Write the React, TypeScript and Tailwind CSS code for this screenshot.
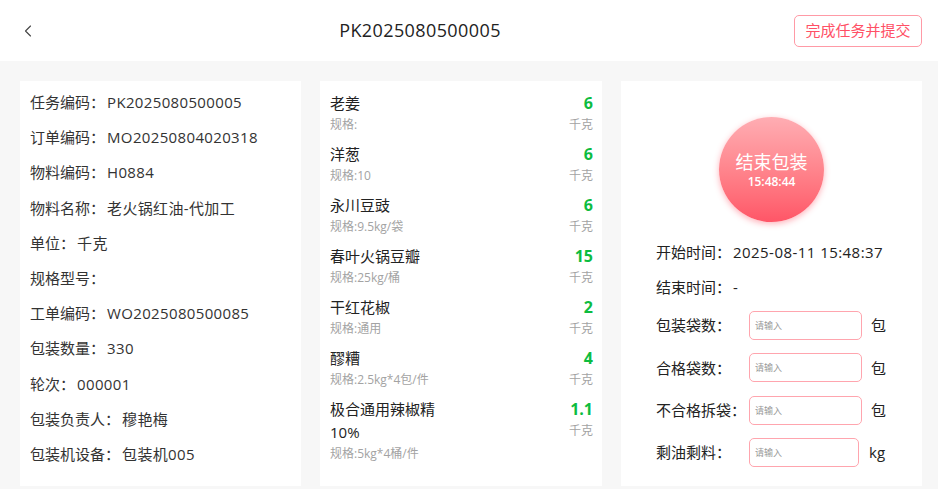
import React from "react"
import { ChevronLeft } from "lucide-react"

type Material = { name: string; spec: string; qty: string }

const fields = [
  ["任务编码", "PK2025080500005"],
  ["订单编码", "MO20250804020318"],
  ["物料编码", "H0884"],
  ["物料名称", "老火锅红油-代加工"],
  ["单位", "千克"],
  ["规格型号", ""],
  ["工单编码", "WO2025080500085"],
  ["包装数量", "330"],
  ["轮次", "000001"],
  ["包装负责人", "穆艳梅"],
  ["包装机设备", "包装机005"],
]

const materials: Material[] = [
  { name: "老姜", spec: "规格:", qty: "6" },
  { name: "洋葱", spec: "规格:10", qty: "6" },
  { name: "永川豆豉", spec: "规格:9.5kg/袋", qty: "6" },
  { name: "春叶火锅豆瓣", spec: "规格:25kg/桶", qty: "15" },
  { name: "干红花椒", spec: "规格:通用", qty: "2" },
  { name: "醪糟", spec: "规格:2.5kg*4包/件", qty: "4" },
  { name: "极合通用辣椒精10%", spec: "规格:5kg*4桶/件", qty: "1.1" },
]

const inputs = [
  { label: "包装袋数：", unit: "包" },
  { label: "合格袋数：", unit: "包" },
  { label: "不合格拆袋：", unit: "包" },
  { label: "剩油剩料：", unit: "kg" },
]

export default function App() {
  return (
    <div className="h-[489px] w-[938px] overflow-hidden bg-[#f7f7f7] font-['Open_Sans','Noto_Sans_CJK_SC',sans-serif] text-[15px] text-[#333]">
      <header className="flex h-[61px] items-center justify-between bg-white pl-[18px] pr-[16px]">
        <ChevronLeft className="h-[20px] w-[20px] text-[#444]" strokeWidth={1.3} />
        <div className="ml-[8px] text-[18px] tracking-[0.4px] text-[#222]">PK2025080500005</div>
        <button className="h-[32px] w-[128px] rounded-[5px] border border-[#ff9aa6] text-[15px] text-[#ff5065]">
          完成任务并提交
        </button>
      </header>

      <main className="flex gap-[19px] pl-[20px] pt-[20px]">
        <section className="flex h-[405px] w-[281px] flex-col gap-[13.2px] bg-white pl-[10px] pt-[10px]">
          {fields.map(([label, value]) => (
            <div key={label} className="h-[22px] leading-[22px]">
              {label}：<span className="ml-[2px] tracking-[0.35px]">{value}</span>
            </div>
          ))}
        </section>

        <section className="flex h-[405px] w-[282px] flex-col gap-[8px] bg-white pl-[10px] pr-[9px] pt-[11px]">
          {materials.map((m) => (
            <div key={m.name} className="flex justify-between">
              <div className="w-[125px]">
                <div className="leading-[23px] text-[#222]">{m.name}</div>
                <div className="whitespace-nowrap text-[12px] leading-[20px] text-[#a3a3a3]">{m.spec}</div>
              </div>
              <div className="text-right">
                <div className="text-[16px] font-bold leading-[23px] text-[#0dbc3f]">{m.qty}</div>
                <div className="text-[12px] leading-[20px] text-[#a3a3a3]">千克</div>
              </div>
            </div>
          ))}
        </section>

        <section className="flex h-[405px] w-[301px] flex-col bg-white pl-[35px] pt-[36px]">
          <div className="ml-[63px] flex h-[105px] w-[105px] flex-col items-center justify-center rounded-full bg-gradient-to-b from-[#ffadb3] to-[#ff5567] text-white shadow-[0_2px_6px_rgba(255,85,103,0.45)]">
            <div className="text-[18px] leading-[24px]">结束包装</div>
            <div className="text-[12px] font-semibold leading-[16px]">15:48:44</div>
          </div>

          <div className="mt-[19px] leading-[22px] text-[#222]">
            开始时间：<span className="ml-[2px] tracking-[0.45px]">2025-08-11 15:48:37</span>
          </div>
          <div className="mt-[13px] leading-[22px] text-[#222]">
            结束时间：<span className="ml-[2px]">-</span>
          </div>

          <div className="mt-[13px] flex flex-col gap-[13.3px] text-[#222]">
            {inputs.map((row) => (
              <div key={row.label} className="flex h-[29px] items-center">
                <div className="w-[93px] shrink-0">{row.label}</div>
                <input
                  placeholder="请输入"
                  className={
                    row.unit === "kg"
                      ? "h-[29px] w-[110px] rounded-[5px] border border-[#ffa5ae] pl-[5px] text-[9px] outline-none placeholder:text-[#999]"
                      : "h-[29px] w-[113px] rounded-[5px] border border-[#ffa5ae] pl-[5px] text-[9px] outline-none placeholder:text-[#999]"
                  }
                />
                <div className={row.unit === "kg" ? "ml-[10px]" : "ml-[9px]"}>{row.unit}</div>
              </div>
            ))}
          </div>
        </section>
      </main>
    </div>
  )
}
